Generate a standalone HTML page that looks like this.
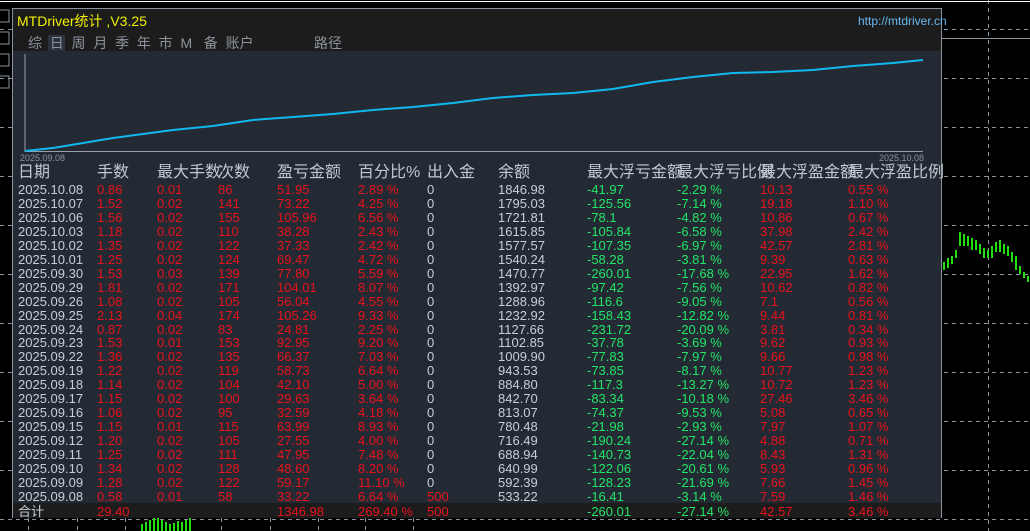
<!DOCTYPE html>
<html><head><meta charset="utf-8"><style>
*{margin:0;padding:0;box-sizing:border-box}
body{width:1030px;height:531px;background:#000;position:relative;overflow:hidden;font-family:"Liberation Sans","Noto Sans CJK SC",sans-serif}
.a{position:absolute;white-space:nowrap}
#panel{position:absolute;left:12px;top:8px;width:930px;height:510px;border:1px solid #8a93a0;background:#242a33}
#hdr{position:absolute;left:0;top:0;width:928px;height:42px;background:#1c1c1c}
.t{font-size:13px;line-height:14px}
.w{color:#c6ced8}.r{color:#e8121c}.g{color:#22e468}
.h{color:#c0c8d2;font-size:16px;line-height:18px}
.tab{color:#8c939c;font-size:14px}
</style></head><body>
<svg class="a" style="left:0;top:0" width="1030" height="531">
<g stroke="#8a93a0" stroke-dasharray="4,4" stroke-width="1">
<line x1="0" y1="29.5" x2="1030" y2="29.5"/><line x1="0" y1="78.5" x2="1030" y2="78.5"/>
<line x1="0" y1="127.5" x2="1030" y2="127.5"/><line x1="0" y1="176.5" x2="1030" y2="176.5"/>
<line x1="0" y1="225.5" x2="1030" y2="225.5"/><line x1="0" y1="274.5" x2="1030" y2="274.5"/>
<line x1="0" y1="323.5" x2="1030" y2="323.5"/><line x1="0" y1="372.5" x2="1030" y2="372.5"/>
<line x1="0" y1="421.5" x2="1030" y2="421.5"/><line x1="0" y1="470.5" x2="1030" y2="470.5"/>
<line x1="0" y1="519.5" x2="1030" y2="519.5"/>
<line x1="988.5" y1="0" x2="988.5" y2="531"/>
<line x1="28.5" y1="518" x2="28.5" y2="531"/><line x1="77.5" y1="518" x2="77.5" y2="531"/><line x1="125.5" y1="518" x2="125.5" y2="531"/><line x1="221.5" y1="518" x2="221.5" y2="531"/><line x1="270.5" y1="518" x2="270.5" y2="531"/><line x1="318.5" y1="518" x2="318.5" y2="531"/><line x1="365.5" y1="518" x2="365.5" y2="531"/><line x1="413.5" y1="518" x2="413.5" y2="531"/>
</g>
<line x1="942" y1="38.5" x2="1030" y2="38.5" stroke="#8a93a0"/>
<line x1="0" y1="1.5" x2="1030" y2="1.5" stroke="#fff"/>
<g stroke="#22e010" stroke-width="2">
<path d="M944 262v8M948 258v10M952 256v8M956 250v8M960 232v14M964 234v12M968 236v10M972 238v12M976 240v10M980 244v10M984 248v10M988 250v8M992 246v12M996 242v10M1000 240v12M1004 244v10M1008 246v10M1012 252v10M1016 256v14M1020 266v8M1024 272v6M1028 276v6"/>
<path d="M142 524v7M146 522v9M150 520v11M154 517v14M158 516v15M162 520v11M166 522v9M170 524v7M174 523v8M178 521v10M182 522v9M186 520v11M190 516v15"/>
</g>
<g fill="none" stroke="#8a93a0"><rect x="-2" y="10" width="11" height="12"/><rect x="-2" y="32" width="11" height="12"/><rect x="-2" y="54" width="11" height="12"/><rect x="-2" y="76" width="11" height="12"/></g>
</svg>
<div id="panel">
<div id="hdr"></div>
<div class="a" style="left:4px;top:2px;font-size:14px;color:#f0f000">MTDriver统计 ,V3.25</div>
<div class="a" style="left:845px;top:5px;font-size:12px;color:#6ab8f0">http://mtdriver.cn</div>
<div class="a" style="left:35px;top:26px;width:17px;height:16px;background:#2c3340"></div>
<div class="a tab" style="left:15px;top:24px;word-spacing:0">综&nbsp;&nbsp;日&nbsp;&nbsp;周&nbsp;&nbsp;月&nbsp;&nbsp;季&nbsp;&nbsp;年&nbsp;&nbsp;巿&nbsp;&nbsp;M&nbsp;&nbsp;&nbsp;备&nbsp;&nbsp;账户</div>
<div class="a tab" style="left:301px;top:24px">路径</div>
<svg class="a" style="left:0;top:0" width="930" height="160">
<line x1="12" y1="45" x2="12" y2="143" stroke="#9aa0a8"/>
<line x1="12" y1="142.5" x2="910" y2="142.5" stroke="#9aa0a8"/>
<polyline fill="none" stroke="#10b8f0" stroke-width="2" points="12,142 40,139 70,134 100,129 130,125 160,121 200,117 240,111 280,108 320,105 360,101 400,98 440,94 480,89 520,86 560,84 600,80 640,73 680,68 720,64 760,63 800,61 840,57 880,54 910,51"/>
<text x="7" y="152" font-size="9" fill="#8c939c" font-family="Liberation Sans">2025.09.08</text>
<text x="866" y="152" font-size="9" fill="#8c939c" font-family="Liberation Sans">2025.10.08</text>
</svg>
<div class="a" style="left:0;top:494px;width:928px;height:15px;background:#1c1c1c"></div>
</div>
<div class="a h" style="left:18px;top:164px">日期</div>
<div class="a h" style="left:97px;top:164px">手数</div>
<div class="a h" style="left:157px;top:164px">最大手数</div>
<div class="a h" style="left:218px;top:164px">次数</div>
<div class="a h" style="left:277px;top:164px">盈亏金额</div>
<div class="a h" style="left:358px;top:164px">百分比%</div>
<div class="a h" style="left:427px;top:164px">出入金</div>
<div class="a h" style="left:498px;top:164px">余额</div>
<div class="a h" style="left:587px;top:164px">最大浮亏金额</div>
<div class="a h" style="left:677px;top:164px">最大浮亏比例</div>
<div class="a h" style="left:760px;top:164px">最大浮盈金额</div>
<div class="a h" style="left:848px;top:164px">最大浮盈比例</div>
<div id="rows"></div>
<script>
var d=[
["2025.10.08","0.86","0.01","86","51.95","2.89 %","0","1846.98","-41.97","-2.29 %","10.13","0.55 %"],
["2025.10.07","1.52","0.02","141","73.22","4.25 %","0","1795.03","-125.56","-7.14 %","19.18","1.10 %"],
["2025.10.06","1.56","0.02","155","105.96","6.56 %","0","1721.81","-78.1","-4.82 %","10.86","0.67 %"],
["2025.10.03","1.18","0.02","110","38.28","2.43 %","0","1615.85","-105.84","-6.58 %","37.98","2.42 %"],
["2025.10.02","1.35","0.02","122","37.33","2.42 %","0","1577.57","-107.35","-6.97 %","42.57","2.81 %"],
["2025.10.01","1.25","0.02","124","69.47","4.72 %","0","1540.24","-58.28","-3.81 %","9.39","0.63 %"],
["2025.09.30","1.53","0.03","139","77.80","5.59 %","0","1470.77","-260.01","-17.68 %","22.95","1.62 %"],
["2025.09.29","1.81","0.02","171","104.01","8.07 %","0","1392.97","-97.42","-7.56 %","10.62","0.82 %"],
["2025.09.26","1.08","0.02","105","56.04","4.55 %","0","1288.96","-116.6","-9.05 %","7.1","0.56 %"],
["2025.09.25","2.13","0.04","174","105.26","9.33 %","0","1232.92","-158.43","-12.82 %","9.44","0.81 %"],
["2025.09.24","0.87","0.02","83","24.81","2.25 %","0","1127.66","-231.72","-20.09 %","3.81","0.34 %"],
["2025.09.23","1.53","0.01","153","92.95","9.20 %","0","1102.85","-37.78","-3.69 %","9.62","0.93 %"],
["2025.09.22","1.36","0.02","135","66.37","7.03 %","0","1009.90","-77.83","-7.97 %","9.66","0.98 %"],
["2025.09.19","1.22","0.02","119","58.73","6.64 %","0","943.53","-73.85","-8.17 %","10.77","1.23 %"],
["2025.09.18","1.14","0.02","104","42.10","5.00 %","0","884.80","-117.3","-13.27 %","10.72","1.23 %"],
["2025.09.17","1.15","0.02","100","29.63","3.64 %","0","842.70","-83.34","-10.18 %","27.46","3.46 %"],
["2025.09.16","1.06","0.02","95","32.59","4.18 %","0","813.07","-74.37","-9.53 %","5.08","0.65 %"],
["2025.09.15","1.15","0.01","115","63.99","8.93 %","0","780.48","-21.98","-2.93 %","7.97","1.07 %"],
["2025.09.12","1.20","0.02","105","27.55","4.00 %","0","716.49","-190.24","-27.14 %","4.88","0.71 %"],
["2025.09.11","1.25","0.02","111","47.95","7.48 %","0","688.94","-140.73","-22.04 %","8.43","1.31 %"],
["2025.09.10","1.34","0.02","128","48.60","8.20 %","0","640.99","-122.06","-20.61 %","5.93","0.96 %"],
["2025.09.09","1.28","0.02","122","59.17","11.10 %","0","592.39","-128.23","-21.69 %","7.66","1.45 %"],
["2025.09.08","0.58","0.01","58","33.22","6.64 %","500","533.22","-16.41","-3.14 %","7.59","1.46 %"]];
var xs=[18,97,157,218,277,358,427,498,587,677,760,848];
var cl=["w","r","r","r","r","r","w","w","g","g","r","r"];
var h="";
d.forEach(function(r,i){r.forEach(function(v,j){var c=cl[j];if(j==6&&v!="0")c="r";h+='<div class="a t '+c+'" style="left:'+xs[j]+'px;top:'+(183+i*13.95)+'px">'+v+'</div>';});});
var tot=[["合计",18,"w"],["29.40",97,"r"],["1346.98",277,"r"],["269.40 %",358,"r"],["500",427,"r"],["-260.01",587,"g"],["-27.14 %",677,"g"],["42.57",760,"r"],["3.46 %",848,"r"]];
tot.forEach(function(t){h+='<div class="a t '+t[2]+'" style="left:'+t[1]+'px;top:505px">'+t[0]+'</div>';});
document.getElementById("rows").innerHTML=h;
</script>
</body></html>
